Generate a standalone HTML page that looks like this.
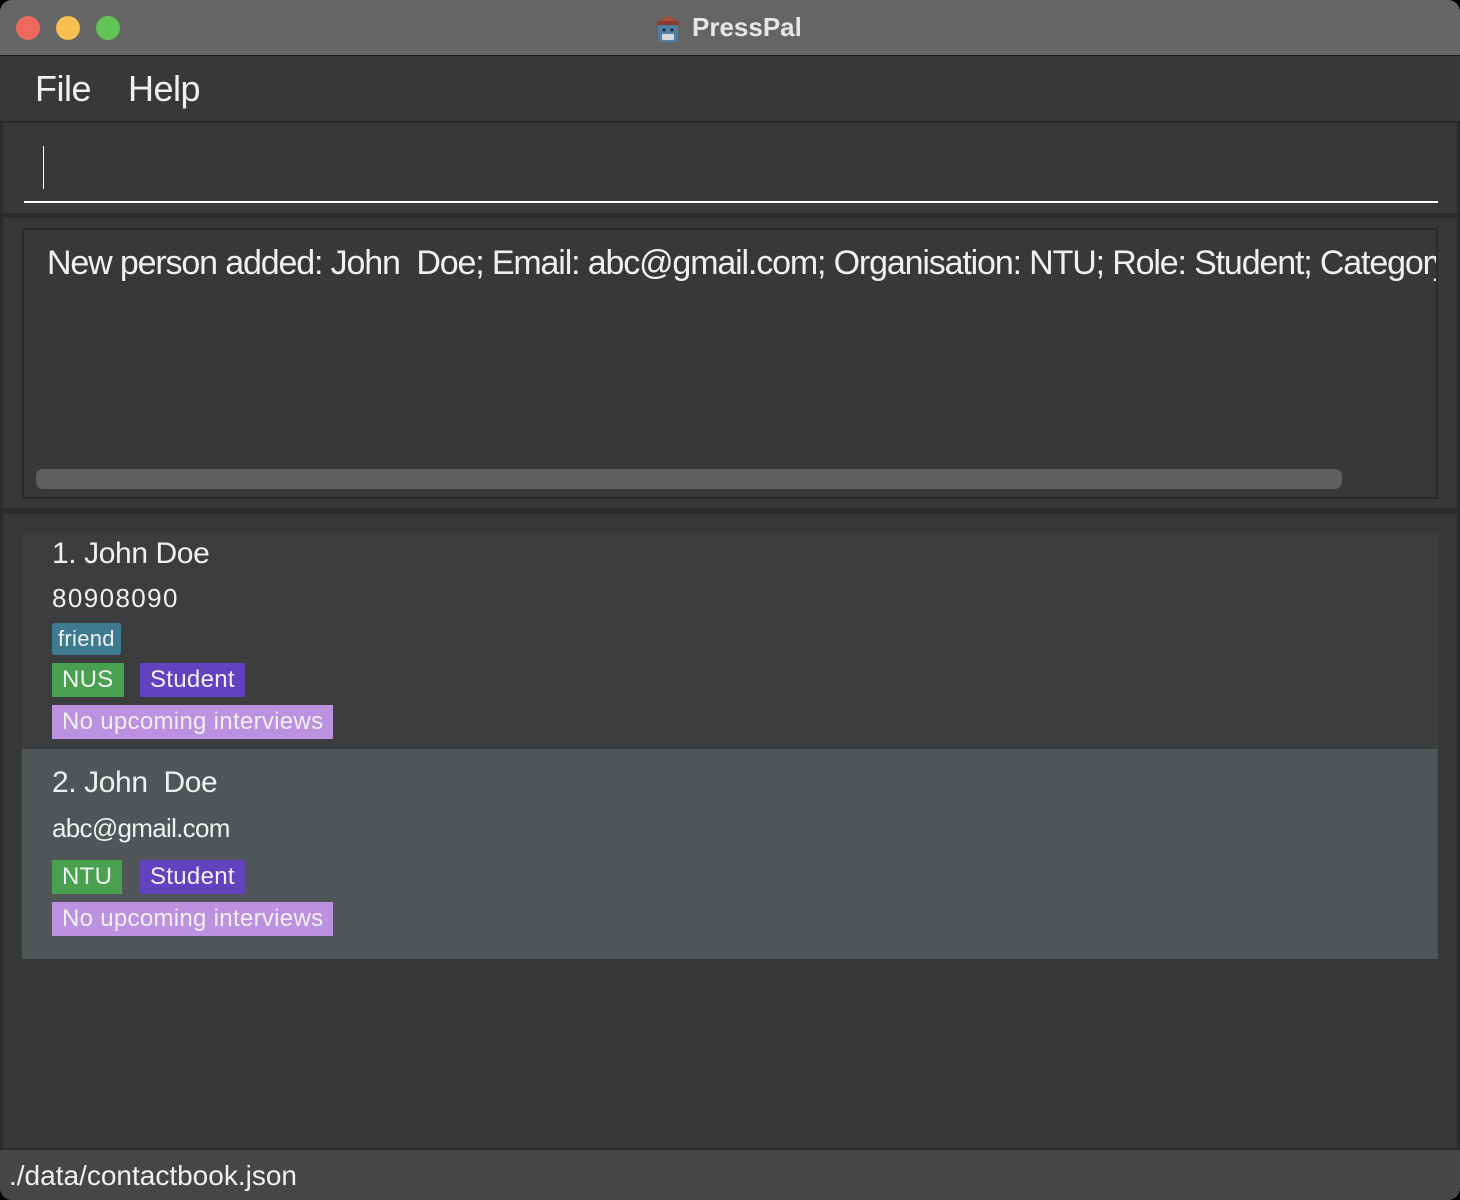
<!DOCTYPE html>
<html><head><meta charset="utf-8"><style>
*{margin:0;padding:0;box-sizing:border-box}
body{width:1460px;height:1200px;background:#000;font-family:"Liberation Sans",sans-serif;overflow:hidden;position:relative}
.win{position:absolute;left:0;top:0;width:1460px;height:1200px;background:#383838;border-radius:12px;overflow:hidden}
.title{position:absolute;left:0;top:0;width:1460px;height:56px;background:#656565;border-bottom:1px solid #1a1a1a}
.dot{position:absolute;top:16px;width:24px;height:24px;border-radius:50%}
.ttl{position:absolute;left:692px;top:12px;font-size:26px;font-weight:bold;color:#e6e6e6}
.menu{position:absolute;top:57px;left:0;width:1460px;height:64px;background:#383838}
.menu span{position:absolute;top:11px;font-size:36px;color:#f0f0f0;letter-spacing:-0.5px}
.a{position:absolute;background:#2b2b2b}
.t{position:absolute;color:#f0f0f0;white-space:nowrap}
.tag{position:absolute;color:#f0f0f0;font-size:24px;height:34px;line-height:34px;padding:0 10px;letter-spacing:0.3px}
</style></head><body>
<div class="win">
<div class="title">
<div class="dot" style="left:16px;background:#ee6a5e"></div>
<div class="dot" style="left:56px;background:#f5be4f"></div>
<div class="dot" style="left:96px;background:#61c454"></div>
<svg style="position:absolute;left:654px;top:12px" width="28" height="32" viewBox="0 0 28 32"><path d="M6 9 Q14 0 22 9Z" fill="#b04a3a"/><rect x="3" y="9" width="22" height="4" fill="#8a3a30"/><rect x="4" y="13" width="20" height="17" rx="3" fill="#4e7fa0"/><rect x="8" y="22" width="12" height="6" fill="#d8d8d8"/><circle cx="10" cy="18" r="1.5" fill="#223"/><circle cx="18" cy="18" r="1.5" fill="#223"/></svg>
<div class="ttl">PressPal</div>
</div>
<div class="menu"><span style="left:35px">File</span><span style="left:128px">Help</span></div>
<div class="a" style="left:0;top:121px;width:1460px;height:2px"></div>
<div class="a" style="left:0;top:121px;width:3px;height:1030px"></div>
<div class="a" style="left:1457px;top:121px;width:3px;height:1030px"></div>
<div style="position:absolute;left:43px;top:146px;width:1px;height:43px;background:#fff"></div>
<div style="position:absolute;left:24px;top:201px;width:1414px;height:2px;background:#fff"></div>
<div class="a" style="left:0;top:213px;width:1460px;height:5px"></div>
<div style="position:absolute;left:22px;top:228px;width:1416px;height:271px;border:2px solid #2b2b2b"></div>
<div style="position:absolute;left:24px;top:230px;width:1412px;height:240px;overflow:hidden"><div class="t" style="left:23px;top:14px;font-size:34px;letter-spacing:-1.15px">New person added: John&nbsp; Doe; Email: abc@gmail.com; Organisation: NTU; Role: Student; Category</div></div>
<div style="position:absolute;left:36px;top:469px;width:1306px;height:20px;border-radius:7px;background:#5f5f5f"></div>
<div class="a" style="left:0;top:508px;width:1460px;height:6px"></div>
<div style="position:absolute;left:22px;top:533px;width:1416px;height:216px;background:#3c3d3f"></div>
<div class="t" style="left:52px;top:537px;font-size:30px;letter-spacing:-0.4px">1. John Doe</div>
<div class="t" style="left:52px;top:583px;font-size:26px;letter-spacing:1.4px">80908090</div>
<div class="tag" style="left:52px;top:623px;height:32px;line-height:32px;background:#3e7b91;border-radius:3px;padding:0 6px;font-size:22px">friend</div>
<div class="tag" style="left:52px;top:663px;background:#49a14f">NUS</div>
<div class="tag" style="left:140px;top:663px;background:#6342bf">Student</div>
<div class="tag" style="left:52px;top:705px;background:#bb91e0">No upcoming interviews</div>
<div style="position:absolute;left:22px;top:749px;width:1416px;height:210px;background:#505558"></div>
<div class="t" style="left:52px;top:766px;font-size:30px;letter-spacing:-0.4px">2. John&nbsp; Doe</div>
<div class="t" style="left:52px;top:813px;font-size:26px;letter-spacing:-0.7px">abc@gmail.com</div>
<div class="tag" style="left:52px;top:860px;background:#49a14f">NTU</div>
<div class="tag" style="left:140px;top:860px;background:#6342bf">Student</div>
<div class="tag" style="left:52px;top:902px;background:#bb91e0">No upcoming interviews</div>
<div class="a" style="left:0;top:1148px;width:1460px;height:2px"></div>
<div style="position:absolute;left:0;top:1150px;width:1460px;height:50px;background:#464646"></div>
<div class="t" style="left:9px;top:1160px;font-size:28px">./data/contactbook.json</div>
</div>
</body></html>
